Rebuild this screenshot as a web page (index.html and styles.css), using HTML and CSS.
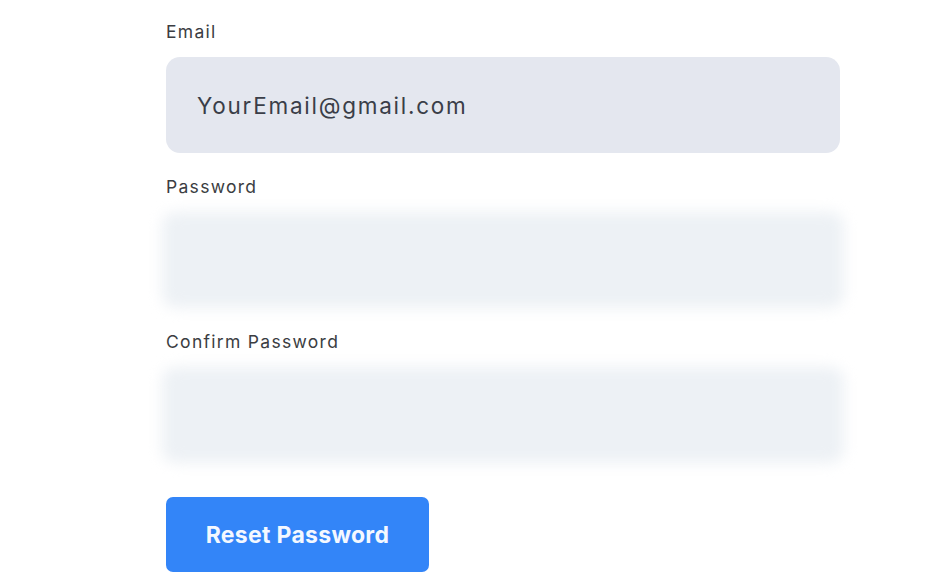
FILE: index.html
```html
<!DOCTYPE html>
<html lang="en">
<head>
<meta charset="utf-8">
<title>Reset Password</title>
<link rel="stylesheet" href="styles.css">
</head>
<body>
<form class="form">
  <div class="field">
    <label class="label">Email</label>
    <div class="input input-email">YourEmail@gmail.com</div>
  </div>
  <div class="field">
    <label class="label">Password</label>
    <div class="input input-blur"></div>
  </div>
  <div class="field">
    <label class="label">Confirm Password</label>
    <div class="input input-blur"></div>
  </div>
  <button type="button" class="btn">Reset Password</button>
</form>
</body>
</html>
```
FILE: styles.css
```css
html, body {
  margin: 0;
  padding: 0;
  background: #ffffff;
}
body {
  font-family: Inter, "DejaVu Sans", sans-serif;
  width: 936px;
  height: 586px;
  overflow: hidden;
}
.form {
  display: flex;
  flex-direction: column;
  gap: 22px;
  padding: 20px 0 0 166px;
  width: 674px;
}
.field {
  display: flex;
  flex-direction: column;
  gap: 13px;
}
.label {
  font-size: 17.5px;
  line-height: 24px;
  letter-spacing: 1.3px;
  color: #3b3d42;
  height: 24px;
}
.input {
  height: 96px;
  border-radius: 14px;
  box-sizing: border-box;
}
.input-email {
  background: #e4e7ef;
  display: flex;
  align-items: center;
  padding-left: 31px;
  font-size: 22.5px;
  letter-spacing: 1.75px;
  color: #3a3e48;
}
.input-blur {
  background: #edf1f5;
  margin: 0 -4px;
  filter: blur(7px);
}
.btn {
  margin-top: 12px;
  width: 263px;
  height: 75px;
  border: none;
  border-radius: 7px;
  background: #3385f8;
  color: #f4f8ff;
  font-family: Inter, sans-serif;
  font-size: 23px;
  font-weight: 700;
  letter-spacing: 0.3px;
  cursor: pointer;
}
```
